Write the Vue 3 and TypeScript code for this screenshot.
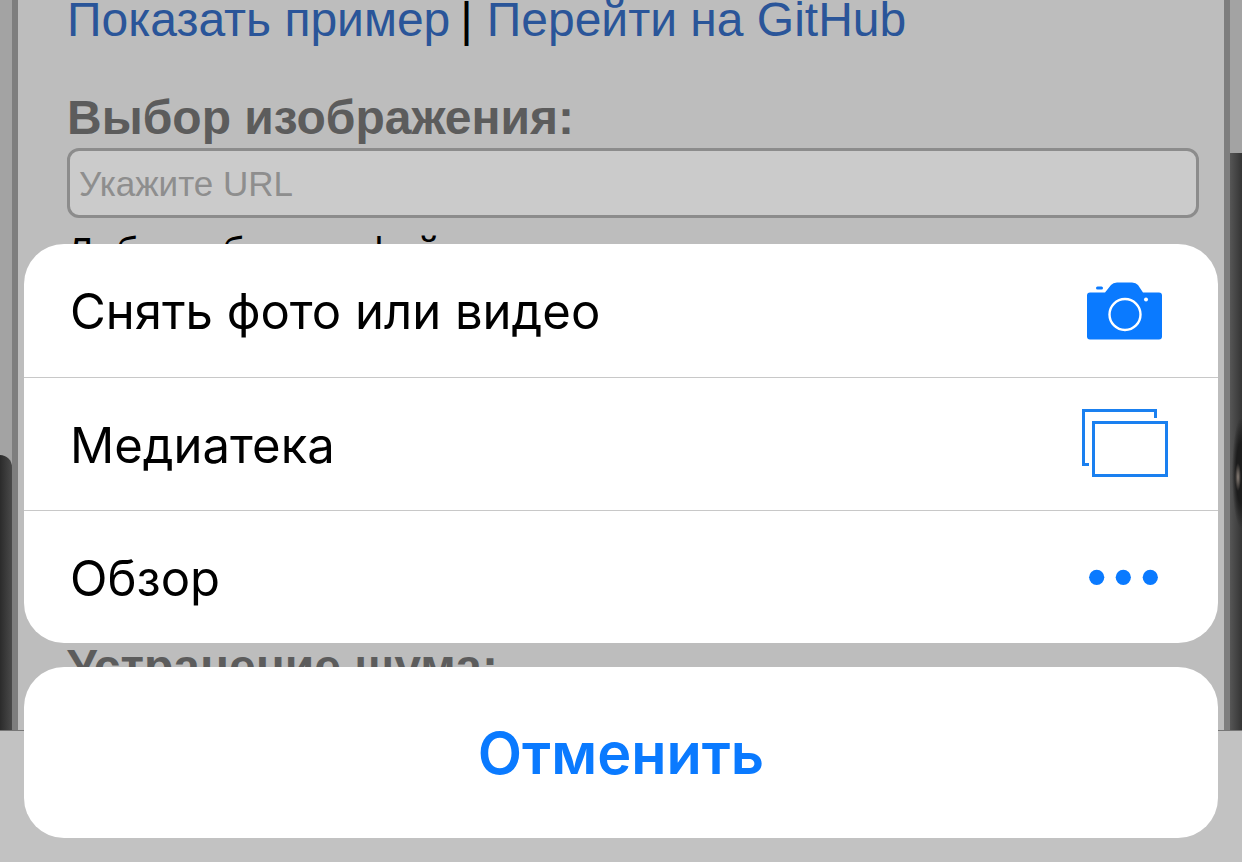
<script setup lang="ts">
const sheetItems = ['Снять фото или видео', 'Медиатека', 'Обзор']
</script>

<template>
  <div class="screen">
    <div class="backdrop">
      <div class="side">
        <div class="side-dark side-dark-left"></div>
      </div>
      <main class="page">
        <p class="links">
          <a>Показать пример</a>
          <span class="sep">|</span>
          <a>Перейти на GitHub</a>
        </p>
        <h2 class="heading">Выбор изображения:</h2>
        <div class="url-input">Укажите URL</div>
        <p class="file-line">Либо выберите файл:</p>
        <h2 class="heading heading-noise">Устранение шума:</h2>
      </main>
      <div class="side">
        <div class="side-dark side-dark-right"></div>
      </div>
    </div>
    <div class="toolbar"></div>

    <div class="sheet">
      <div class="group">
        <div v-for="(item, i) in sheetItems" :key="item" class="row">
          <span class="label">{{ item }}</span>
          <svg v-if="i === 0" class="icon" width="90" height="70" viewBox="0 0 90 70">
            <path fill="#0a7aff" d="M10 16.500H25L31 9Q33 6.500 37 6.500H52Q56 6.500 58 9L63 16.500H79Q82 16.500 82 19.500V60.500Q82 63.500 79 63.500H10Q7 63.500 7 60.500V19.500Q7 16.500 10 16.500Z" />
            <rect x="16" y="10.500" width="7" height="3" rx="1.500" fill="#0a7aff" />
            <circle cx="45" cy="38.500" r="15.500" fill="none" stroke="#fff" stroke-width="2.400" />
            <circle cx="66" cy="23.500" r="2" fill="#fff" />
          </svg>
          <svg v-else-if="i === 1" class="icon" width="90" height="70" viewBox="0 0 90 70">
            <path fill="none" stroke="#1a80f0" stroke-width="3" d="M9 55.500H3.500V1.500H75.500V9" />
            <rect x="13.500" y="13.500" width="73" height="53" fill="none" stroke="#1a80f0" stroke-width="3" />
          </svg>
          <svg v-else class="icon" width="90" height="70" viewBox="0 0 90 70">
            <circle cx="16.700" cy="35.300" r="7.600" fill="#0a7aff" />
            <circle cx="43.300" cy="35.300" r="7.600" fill="#0a7aff" />
            <circle cx="70.300" cy="35.300" r="7.600" fill="#0a7aff" />
          </svg>
        </div>
      </div>
      <button class="cancel">Отменить</button>
    </div>
  </div>
</template>

<style>
html,
body {
  margin: 0;
  background: #c2c2c2;
}
</style>

<style scoped>
.screen {
  position: relative;
  width: 1242px;
  height: 862px;
  overflow: hidden;
  background: #c2c2c2;
  font-family: "Liberation Sans", Arial, sans-serif;
}

.backdrop {
  display: flex;
  height: 730px;
  overflow: hidden;
}

.side {
  flex: none;
  display: flex;
  flex-direction: column;
  justify-content: flex-end;
  width: 12px;
  background: #a3a3a3;
}

.side-dark-left {
  height: 275px;
  border-top-right-radius: 14px;
  background: linear-gradient(to right, #2b2b2b, #4a4a4a);
}

.side-dark-right {
  height: 577px;
  background:
    radial-gradient(ellipse 3px 14px at 8px 324px, #8a8078, transparent),
    radial-gradient(ellipse 9px 55px at 11px 320px, #1c1c1c 55%, transparent),
    linear-gradient(to right, #565656, #343434);
}

.page {
  flex: 1;
  box-sizing: border-box;
  padding: 0 25px 0 49px;
  background: #bdbdbd;
  border-left: 6px solid #7e7e7e;
  border-right: 6px solid #7e7e7e;
}

.links {
  margin: -6px 0 0;
  font-size: 48px;
  line-height: 52px;
  color: #000;
}

.links a {
  color: #2a5599;
}

.sep {
  margin: 0 14px 0 10px;
}

.heading {
  margin: 46px 0 0;
  font-size: 48px;
  line-height: 52px;
  font-weight: 700;
  color: #5c5c5c;
}

.url-input {
  box-sizing: border-box;
  height: 70px;
  margin-top: 4px;
  padding-left: 9px;
  font-size: 35px;
  line-height: 65px;
  color: #8e8e8e;
  background: #cbcbcb;
  border: 3px solid #8c8c8c;
  border-radius: 12px;
}

.file-line {
  margin: 12px 0 0;
  font-size: 40px;
  line-height: 44px;
  color: #000;
}

.heading-noise {
  margin-top: 367px;
}

.toolbar {
  box-sizing: border-box;
  height: 132px;
  background: #c2c2c2;
  border-top: 1px solid #777;
}

.sheet {
  position: absolute;
  left: 24px;
  top: 244px;
  width: 1194px;
  display: flex;
  flex-direction: column;
  gap: 24px;
}

.group {
  background: #fff;
  border-radius: 40px;
  overflow: hidden;
}

.row {
  display: flex;
  align-items: center;
  justify-content: space-between;
  box-sizing: border-box;
  height: 133px;
  padding: 0 48px 0 46px;
  border-top: 1px solid #c8c8c8;
}

.row:first-child {
  border-top: 0;
}

.label {
  padding-top: 2px;
  font-family: Inter, "Noto Sans", sans-serif;
  font-size: 49px;
  color: #000;
}

.icon {
  flex: none;
  display: block;
}

.cancel {
  display: block;
  width: 100%;
  height: 171px;
  padding: 0;
  border: 0;
  border-radius: 40px;
  background: #fff;
  font-family: Inter, "Noto Sans", sans-serif;
  font-size: 57.600px;
  font-weight: 600;
  color: #0a7aff;
}
</style>
